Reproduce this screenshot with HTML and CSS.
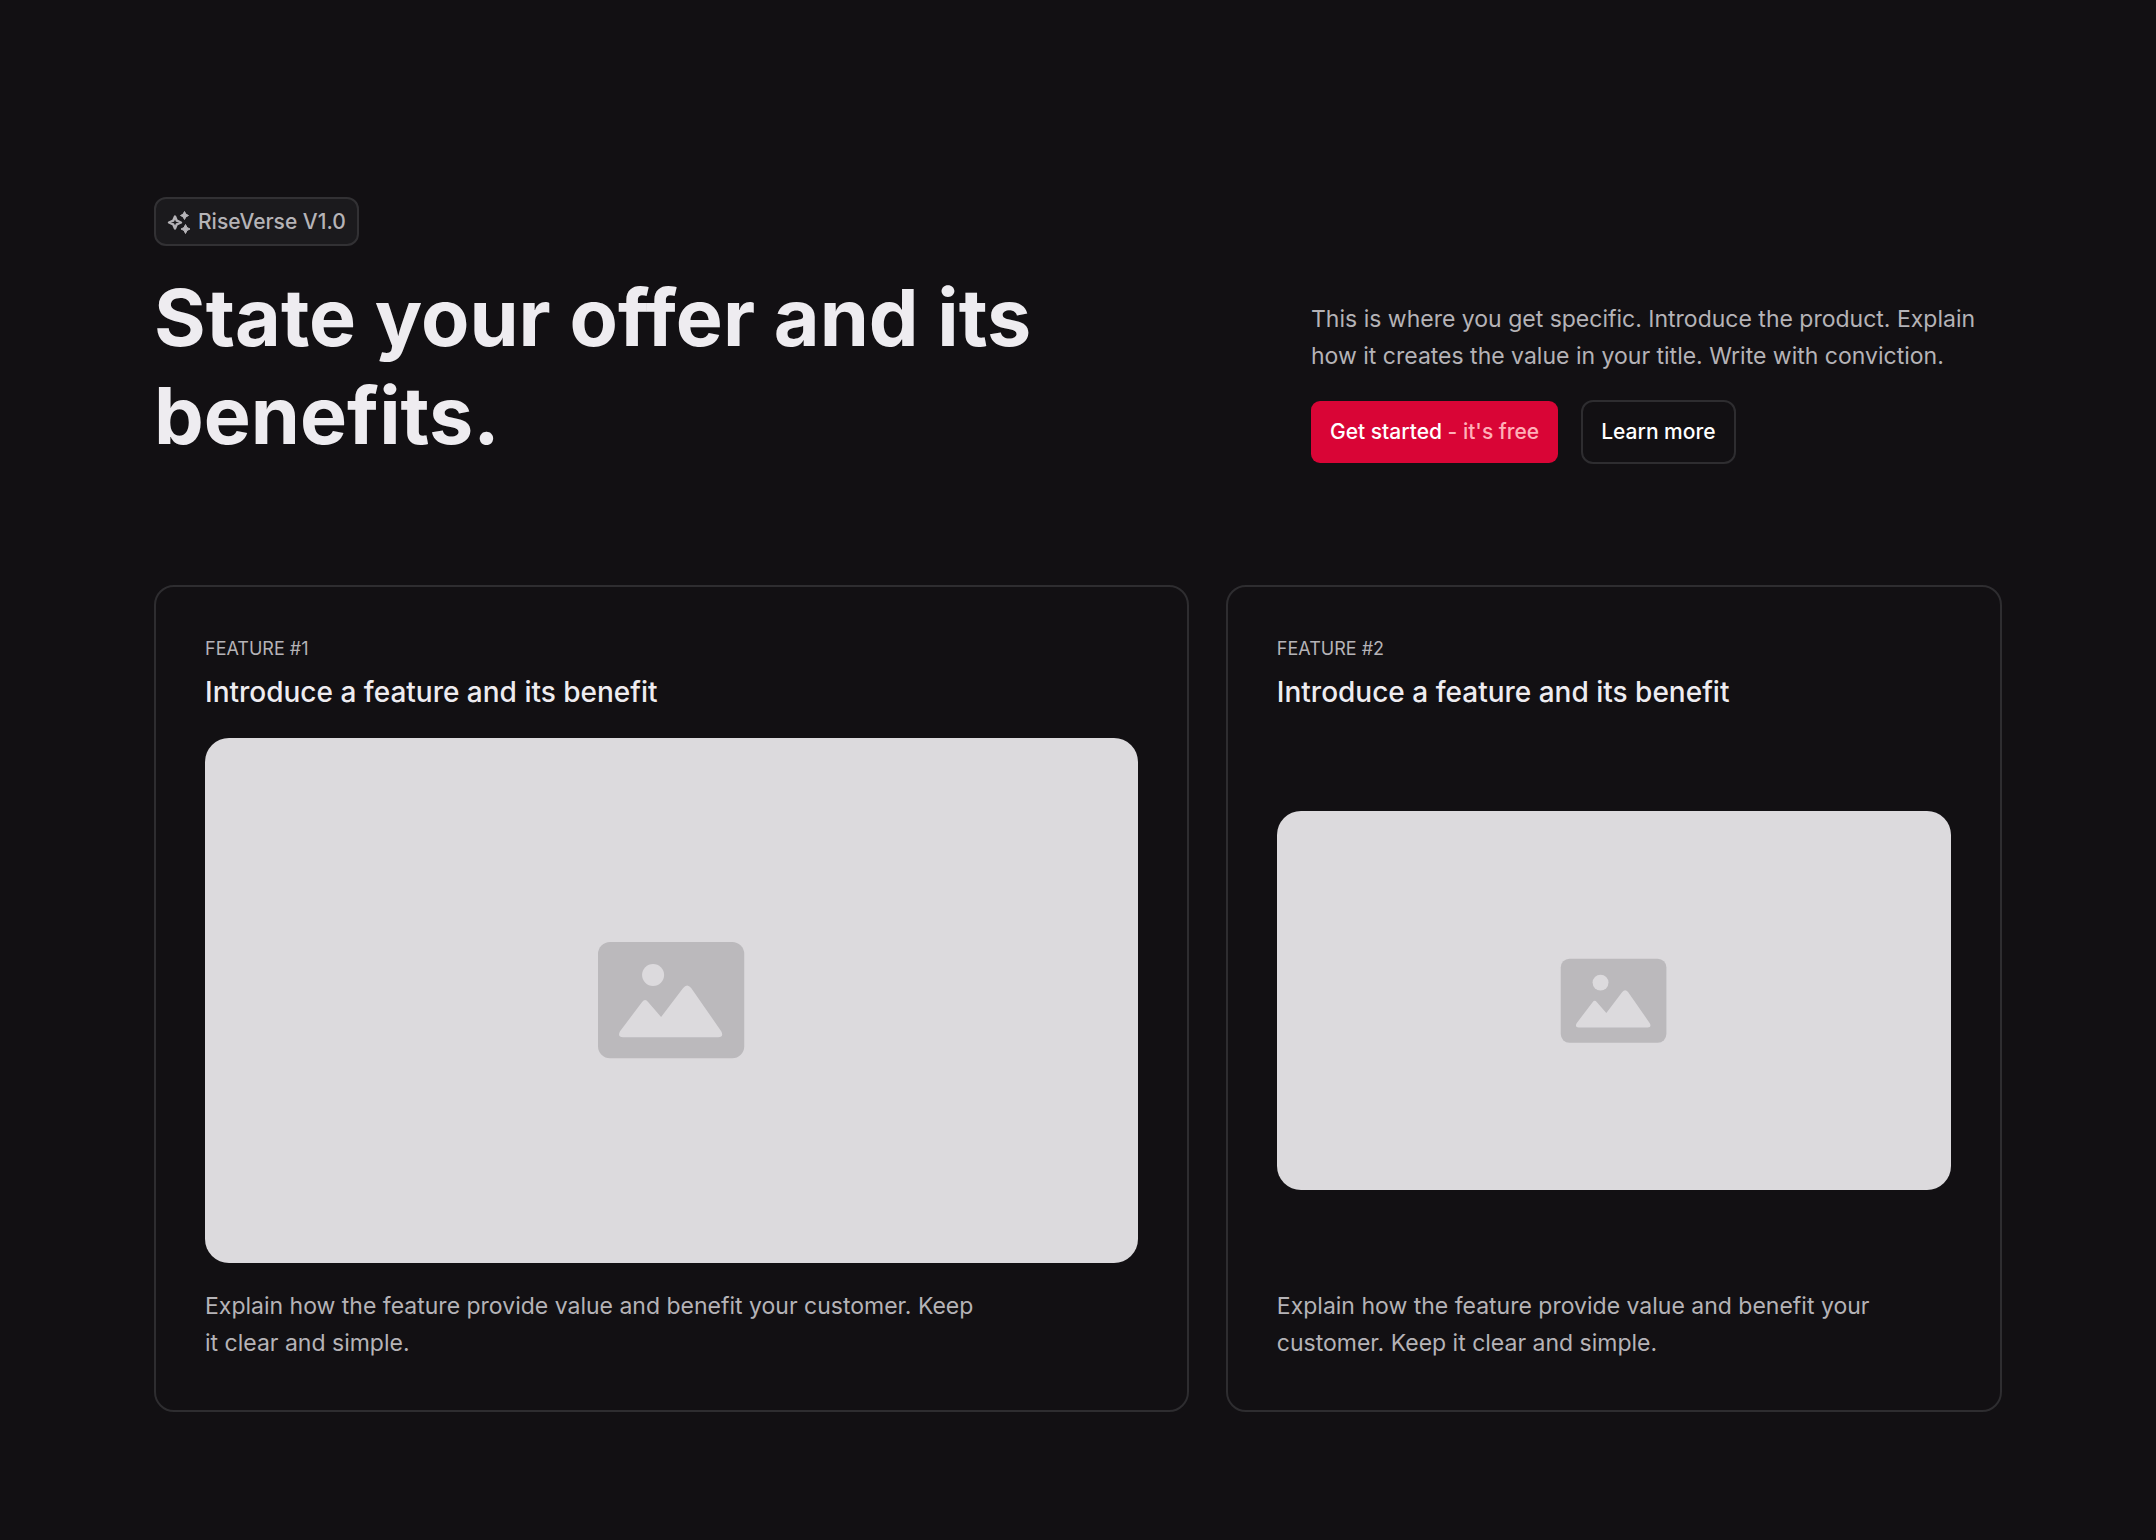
FILE: index.html
```html
<!DOCTYPE html>
<html lang="en">
<head>
<meta charset="utf-8">
<meta name="viewport" content="width=device-width, initial-scale=1">
<title>RiseVerse</title>
<link rel="stylesheet" href="styles.css">
</head>
<body>
<main class="page">
  <header class="intro">
    <div class="intro-title">
      <p class="badge">
        <svg class="badge-icon" viewBox="0 0 24 24" aria-hidden="true"><path fill="none" stroke="currentColor" stroke-width="2.400" stroke-linejoin="round" d="M8 6.500L9.800 10.700 14 12.500 9.800 14.300 8 18.500 6.200 14.300 2 12.500 6.200 10.700z"/><path fill="currentColor" d="M17.500 1.500l1.400 2.600L21.500 5.500l-2.600 1.400-1.400 2.600-1.400-2.600L13.500 5.500l2.600-1.400zM18.500 14.500l1.500 3 3 1.500-3 1.500-1.500 3-1.500-3-3-1.500 3-1.500z" stroke="currentColor" stroke-width="1" stroke-linejoin="round"/></svg>
        <span>RiseVerse V1.0</span>
      </p>
      <h1>State your offer and its benefits.</h1>
    </div>
    <div class="intro-text">
      <p class="copy">This is where you get specific. Introduce the product. Explain how it creates the value in your title. Write with conviction.</p>
      <div class="actions">
        <button class="btn btn-primary" type="button">Get started <span class="btn-note">- it's free</span></button>
        <button class="btn btn-outline" type="button">Learn more</button>
      </div>
    </div>
  </header>

  <section class="features">
    <article class="card">
      <p class="eyebrow">Feature #1</p>
      <h2>Introduce a feature and its benefit</h2>
      <div class="media">
        <div class="placeholder">
          <svg viewBox="-1 -1 149 118" aria-hidden="true"><rect class="ph-frame" width="146" height="116" rx="12"/><circle class="ph-cut" cx="55" cy="33" r="11"/><path class="ph-cut" d="M25 95q-6 0-3-6l22-29q3-4 6 0l13 15 22-29q4-5 8 0l30 43q3 6-3 6z"/></svg>
        </div>
      </div>
      <p class="copy">Explain how the feature provide value and benefit your customer. Keep it clear and simple.</p>
    </article>
    <article class="card">
      <p class="eyebrow">Feature #2</p>
      <h2>Introduce a feature and its benefit</h2>
      <div class="media">
        <div class="placeholder">
          <svg viewBox="-1 -1 149 118" aria-hidden="true"><rect class="ph-frame" width="146" height="116" rx="12"/><circle class="ph-cut" cx="55" cy="33" r="11"/><path class="ph-cut" d="M25 95q-6 0-3-6l22-29q3-4 6 0l13 15 22-29q4-5 8 0l30 43q3 6-3 6z"/></svg>
        </div>
      </div>
      <p class="copy">Explain how the feature provide value and benefit your customer. Keep it clear and simple.</p>
    </article>
  </section>
</main>
</body>
</html>
```
FILE: styles.css
```css
* { box-sizing: border-box; }

body {
  margin: 0;
  background: #121013;
  color: #eeecf0;
  font-family: Inter, "Liberation Sans", sans-serif;
}

h1, h2, p { margin: 0; }

.page { padding: 197px 154px 128px; }

.intro {
  display: grid;
  grid-template-columns: minmax(0, 1fr) 691px;
  align-items: end;
  margin-bottom: 121px;
}

.intro-title { max-width: 960px; }

.badge {
  display: inline-flex;
  align-items: center;
  gap: 7px;
  height: 49px;
  padding: 0 11px;
  border: 2px solid #323134;
  border-radius: 12px;
  background: #1b1a1d;
  color: #b5b3b7;
  font-size: 21px;
  font-weight: 500;
}

.badge-icon { width: 24px; height: 24px; }

h1 {
  margin-top: 22px;
  font-size: 79px;
  line-height: 98px;
  font-weight: 700;
}

.copy {
  color: #b5b3b7;
  font-size: 23px;
  line-height: 37px;
}

.actions {
  display: flex;
  align-items: center;
  gap: 23px;
  margin-top: 25px;
}

.btn {
  height: 62px;
  padding: 0 19px;
  border: 0;
  border-radius: 9px;
  color: #fff;
  font: 500 21px/30px Inter, "Liberation Sans", sans-serif;
}

.btn-primary { background: #d90536; }
.btn-note { color: #ffb0b8; }

.btn-outline {
  height: 64px;
  padding: 0 18px;
  border: 2px solid #2e2d30;
  border-radius: 12px;
  background: transparent;
}

.features {
  display: grid;
  grid-template-columns: 4fr 3fr;
  gap: 37px;
}

.card {
  display: flex;
  flex-direction: column;
  padding: 49px 49px 48px;
  border: 2px solid #2e2d30;
  border-radius: 20px;
}

.eyebrow {
  color: #b5b3b7;
  font-size: 18px;
  line-height: 26px;
  text-transform: uppercase;
}

h2 {
  margin-top: 12px;
  font-size: 28px;
  line-height: 36px;
  font-weight: 500;
}

.media {
  display: flex;
  flex: 1;
  align-items: center;
  margin: 28px 0 25px;
}

.placeholder {
  display: flex;
  align-items: center;
  justify-content: center;
  width: 100%;
  aspect-ratio: 16 / 9;
  border-radius: 24px;
  background: #dcdadd;
}

.placeholder svg { width: 16%; }
.ph-frame { fill: #bbb9bc; }
.ph-cut { fill: #dcdadd; }

.card .copy { max-width: 780px; }
```
